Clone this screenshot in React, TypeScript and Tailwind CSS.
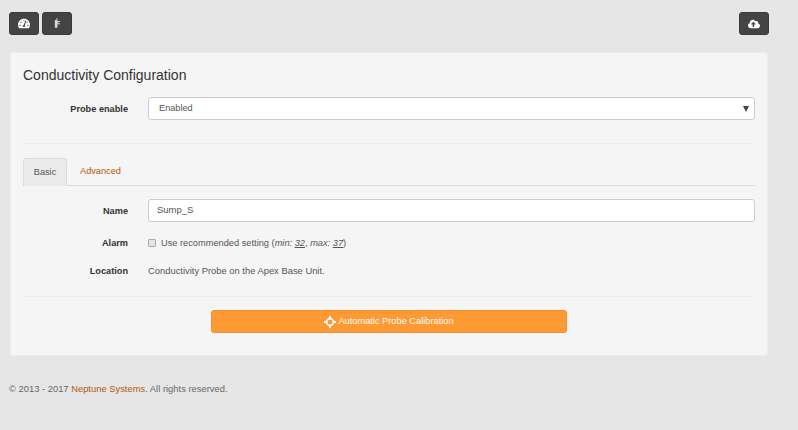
import { FaCloudUploadAlt, FaTachometerAlt } from "react-icons/fa"

function ToolButton({ children }: { children: React.ReactNode }) {
  return (
    <button className="flex h-[23px] w-[30px] items-center justify-center rounded-[3px] border border-[#3a3a3a] bg-[#444444] text-white">
      {children}
    </button>
  )
}

function Row({ label, className, children }: { label: string; className: string; children: React.ReactNode }) {
  return (
    <div className={`flex items-center ${className}`}>
      <div className="w-[105px] text-right text-[9.2px] font-bold leading-3 text-[#333333]">{label}</div>
      <div className="ml-5 flex-1">{children}</div>
    </div>
  )
}

export default function App() {
  return (
    <div className="h-[430px] w-[798px] overflow-hidden bg-[#e6e6e6] font-['Liberation_Sans',Arial,sans-serif] text-[#555555]">
      <div className="flex justify-between pl-[9px] pr-[29px] pt-3">
        <div className="flex gap-[3px]">
          <ToolButton>
            <FaTachometerAlt className="h-[11px] w-3" />
          </ToolButton>
          <ToolButton>
            <svg viewBox="0 0 7 12" className="h-[11px] w-[6px]">
              <path d="M1 2h3v9H1z" fill="#cfe0d4" />
              <path d="M3 0h1v2H3zM4 3h3v1H5v2h2v1H4z" fill="#f0f0e8" />
            </svg>
          </ToolButton>
        </div>
        <ToolButton>
          <FaCloudUploadAlt className="h-3 w-3" />
        </ToolButton>
      </div>

      <div className="ml-[10px] mt-[17px] h-[304px] w-[758px] rounded-[3px] border border-[#eeeeee] bg-[#f5f5f5] px-3 pt-3">
        <h1 className="text-[14px] leading-[20px] text-[#333333]">Conductivity Configuration</h1>

        <Row label="Probe enable" className="mt-3">
          <div className="flex h-[23px] w-[607px] items-center justify-between rounded-[3px] border border-[#cccccc] bg-white pl-[10px] pr-[5px] text-[9.2px]">
            <span>Enabled</span>
            <span className="h-0 w-0 border-x-[3.5px] border-t-[6px] border-x-transparent border-t-[#444444]" />
          </div>
        </Row>

        <hr className="mt-[23px] border-[#eeeeee]" />

        <div className="mt-[14px] flex h-[28px] w-[732px] border-b border-[#dddddd] text-[9.2px]">
          <div className="flex h-[28px] w-[44px] items-center justify-center rounded-t-[3px] border border-b-0 border-[#dddddd] bg-[#ebebeb]">
            Basic
          </div>
          <div className="ml-[13px] flex items-center text-[#b35a0c]">Advanced</div>
        </div>

        <Row label="Name" className="mt-[13px]">
          <div className="flex h-[23px] w-[607px] items-center rounded-[3px] border border-[#cccccc] bg-white pl-2 text-[9.5px]">
            Sump_S
          </div>
        </Row>

        <Row label="Alarm" className="mt-[15px] h-[12px]">
          <div className="flex items-center text-[9.25px] leading-3">
            <span className="h-2 w-2 rounded-[1px] border border-[#aaaaaa] bg-[#e4e4e4]" />
            <span className="ml-[5px]">
              Use recommended setting (<i>min:</i> <i className="underline">32</i>, <i>max:</i>{" "}
              <i className="underline">37</i>)
            </span>
          </div>
        </Row>

        <Row label="Location" className="mt-4 h-[12px]">
          <div className="text-[9.4px] leading-3">Conductivity Probe on the Apex Base Unit.</div>
        </Row>

        <hr className="mt-[19px] border-[#eeeeee]" />

        <button className="ml-[188px] mt-[13px] flex h-[23px] w-[356px] items-center justify-center rounded-[3px] border border-[#f09030] bg-[#ff9933] text-[9.25px] text-white">
          <svg viewBox="0 0 12 12" className="mr-[2px] h-3 w-3" fill="none" stroke="white">
            <circle cx="6" cy="6" r="3.4" strokeWidth="1.6" />
            <path d="M6 0v3.2M6 8.8V12M0 6h3.2M8.8 6H12" strokeWidth="1.8" />
          </svg>
          Automatic Probe Calibration
        </button>
      </div>

      <p className="ml-[9px] mt-[27px] text-[9.4px] leading-[12px] text-[#666666]">
        © 2013 - 2017 <span className="text-[#b35a0c]">Neptune Systems.</span> All rights reserved.
      </p>
    </div>
  )
}
